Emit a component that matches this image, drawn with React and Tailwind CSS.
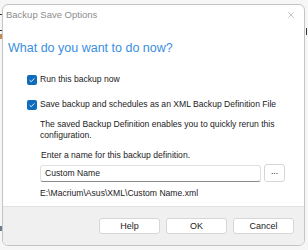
import { X } from "lucide-react";

const font = { fontFamily: '"Liberation Sans", Arial, sans-serif' };

const Check = () => (
  <span className="flex h-[10px] w-[10px] shrink-0 items-center justify-center rounded-[2px] bg-[#0f6cbd]">
    <svg width="8" height="8" viewBox="0 0 8 8">
      <path d="M1.6 4.2 L3.2 5.7 L6.4 2.4" fill="none" stroke="white" strokeWidth="0.9" />
    </svg>
  </span>
);

const Btn = ({ children }) => (
  <button className="h-[16px] w-[61px] rounded-[3px] border border-[#d6d6d6] bg-white text-[9px] leading-none text-[#1b1b1b]">
    {children}
  </button>
);

export default function App() {
  return (
    <div className="relative h-[250px] w-[308px] overflow-hidden bg-[#f6f6f6]" style={font}>
      {/* bits of the window behind */}
      <div className="absolute left-0 top-[14px] h-[1px] w-[2px] bg-[#333]" />
      <div className="absolute left-0 top-[30px] h-[1px] w-[2px] bg-[#333]" />
      <div className="absolute left-0 top-[34px] h-[5px] w-[2px] bg-[#c08a50]" />
      <div className="absolute left-0 top-[226px] h-[5px] w-[2px] bg-[#6b7a8c]" />
      <div className="absolute left-[306px] top-[28px] h-[7px] w-[1px] bg-[#333]" />

      {/* dialog */}
      <div className="absolute left-[2px] top-[4px] flex h-[242px] w-[303px] flex-col overflow-hidden rounded-[6px] border border-[#c4c4c4] bg-white">
        <div className="flex h-[20px] items-center justify-between pl-[3px] pr-[8px]">
          <span className="text-[9.5px] text-[#8c8c8c]">Backup Save Options</span>
          <X className="h-[10px] w-[10px] text-[#8c8c8c]" strokeWidth={1.2} />
        </div>

        <div className="mt-[17px] pl-[5px] text-[12.5px] leading-none text-[#3a8ee0]">
          What do you want to do now?
        </div>

        <div className="mt-[20px] flex flex-col pl-[24px] text-[8.6px] leading-none text-[#1b1b1b]">
          <label className="flex items-center gap-[3px]">
            <Check />
            <span>Run this backup now</span>
          </label>
          <label className="mt-[15px] flex items-center gap-[3px]">
            <Check />
            <span>Save backup and schedules as an XML Backup Definition File</span>
          </label>

          <div className="mt-[9px] pl-[13px] leading-[11px]">
            The saved Backup Definition enables you to quickly rerun this
            <br />
            configuration.
          </div>

          <div className="mt-[10px] pl-[14px]">Enter a name for this backup definition.</div>

          <div className="mt-[5px] flex items-center gap-[3px] pl-[13px]">
            <div className="flex h-[17px] w-[221px] items-center rounded-[3px] border border-[#e0e0e0] border-b-[#8a8a8a] pl-[4px]">
              Custom Name
            </div>
            <div className="flex h-[18px] w-[21px] items-center justify-center rounded-[3px] border border-[#d6d6d6] pb-[3px]">
              ...
            </div>
          </div>

          <div className="mt-[7px] pl-[13px]">E:\Macrium\Asus\XML\Custom Name.xml</div>
        </div>

        <div className="mt-auto flex h-[39px] items-center justify-end gap-[6px] border-t border-[#e3e3e3] bg-[#f0f0f0] pr-[10px]">
          <Btn>Help</Btn>
          <Btn>OK</Btn>
          <Btn>Cancel</Btn>
        </div>
      </div>
    </div>
  );
}
